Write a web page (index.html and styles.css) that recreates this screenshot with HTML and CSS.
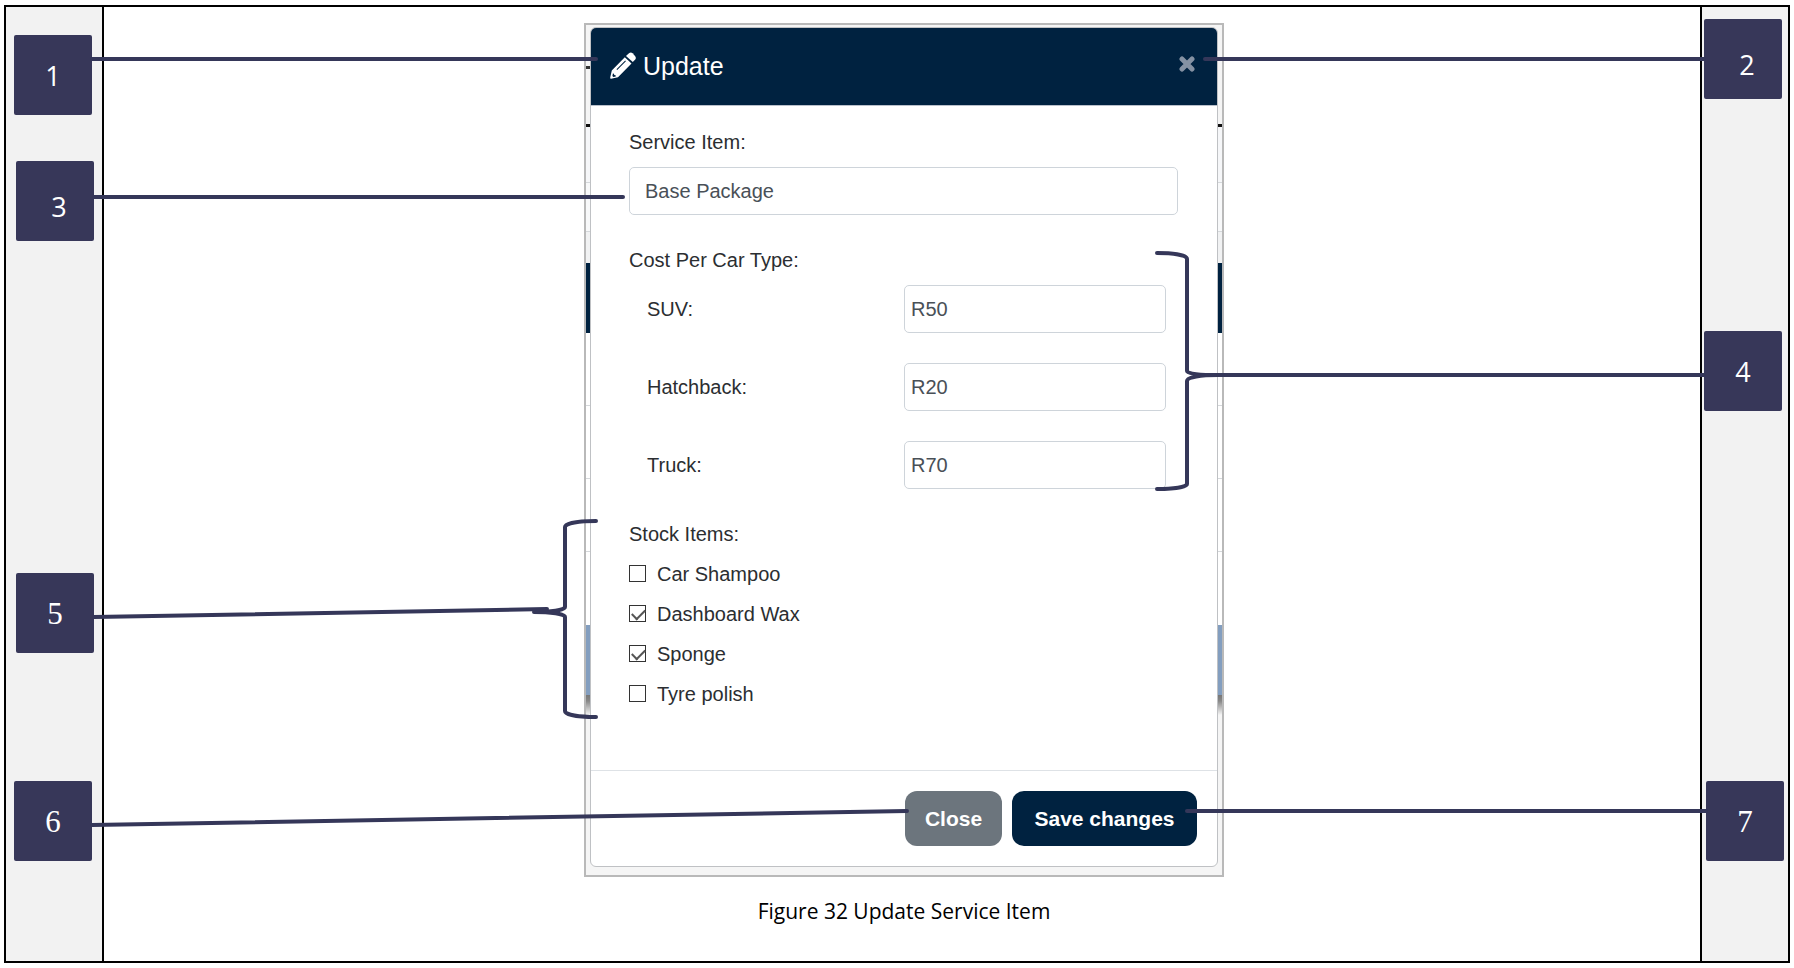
FILE: index.html
```html
<!DOCTYPE html>
<html lang="en">
<head>
<meta charset="utf-8">
<title>Figure 32 Update Service Item</title>
<link rel="stylesheet" href="styles.css">
</head>
<body>
<div class="sheet">
  <aside class="rail rail-left">
    <div class="marker marker-1">1</div>
    <div class="marker marker-3 marker-low">3</div>
    <div class="marker marker-5 marker-serif">5</div>
    <div class="marker marker-6 marker-serif">6</div>
  </aside>

  <main class="stage">
    <figure class="figure">
      <div class="shot">
        <form class="dialog">
          <header class="dialog-header">
            <svg class="pencil" viewBox="0 0 26 27" aria-hidden="true">
              <path fill="#fff" d="M17 3 L19.300 1 Q21 0 22.600 1.300 L25 4 Q26.600 6 25 7.700 L22.800 10 L16 4.100 Z"/>
              <path fill="#fff" fill-rule="evenodd" d="M14.800 5.300 L21.500 11.500 L8 25.200 L1 26.800 Q0 26.800 .2 25.600 L1.800 18.400 Z M2.900 21.600 L2.400 24 L3.400 25 L5.800 24.500 L5.600 23.300 L4.200 23.100 L4 21.700 Z M15.200 8.600 L6.500 17.300 L7.200 18 L15.900 9.300 Z"/>
            </svg>
            <h1 class="title">Update</h1>
            <button class="dismiss" type="button" aria-label="Dismiss">
              <svg viewBox="0 0 16 18" aria-hidden="true"><path d="M3 4 L13 14 M13 4 L3 14" stroke="#8592a3" stroke-width="5" stroke-linecap="round"/></svg>
            </button>
          </header>

          <div class="dialog-body">
            <section class="group">
              <label class="label" for="item">Service Item:</label>
              <input class="field field-wide" id="item" type="text" value="Base Package">
            </section>
            <section class="group">
              <div class="label">Cost Per Car Type:</div>
              <div class="costs">
                <div class="cost"><label for="suv">SUV:</label><input class="field" id="suv" type="text" value="R50"></div>
                <div class="cost"><label for="hatch">Hatchback:</label><input class="field" id="hatch" type="text" value="R20"></div>
                <div class="cost"><label for="truck">Truck:</label><input class="field" id="truck" type="text" value="R70"></div>
              </div>
            </section>
            <section class="stock">
              <div class="label">Stock Items:</div>
              <label class="option"><input class="tick" type="checkbox">Car Shampoo</label>
              <label class="option"><input class="tick" type="checkbox" checked>Dashboard Wax</label>
              <label class="option"><input class="tick" type="checkbox" checked>Sponge</label>
              <label class="option"><input class="tick" type="checkbox">Tyre polish</label>
            </section>
          </div>

          <footer class="dialog-footer">
            <button class="btn btn-close" type="button">Close</button>
            <button class="btn btn-save" type="button">Save changes</button>
          </footer>
        </form>
        <svg class="ink brace-costs" viewBox="0 0 68 241" aria-hidden="true"><path d="M4 2 C20 2 34 4 34 8 V120 C34 123 48 124 65 124 C48 124 34 126 34 130 V233 C34 236 20 238 4 238"/></svg>
        <svg class="ink brace-stock" viewBox="0 0 70 200" aria-hidden="true"><path d="M66 2 C50 2 35 4 35 8 V88 C35 91 20 93 4 93 C20 93 35 95 35 98 V192 C35 196 50 198 66 198"/></svg>
      </div>
      <figcaption class="caption">Figure 32 Update Service Item</figcaption>
    </figure>

    <svg class="ink wire wire-1" viewBox="0 0 100 4" preserveAspectRatio="none" aria-hidden="true"><path d="M0 2 H100"/></svg>
    <svg class="ink wire wire-2" viewBox="0 0 100 4" preserveAspectRatio="none" aria-hidden="true"><path d="M0 2 H100"/></svg>
    <svg class="ink wire wire-3" viewBox="0 0 100 4" preserveAspectRatio="none" aria-hidden="true"><path d="M0 2 H100"/></svg>
    <svg class="ink wire wire-4" viewBox="0 0 100 4" preserveAspectRatio="none" aria-hidden="true"><path d="M0 2 H100"/></svg>
    <svg class="ink wire wire-5" viewBox="0 0 100 8" preserveAspectRatio="none" aria-hidden="true"><path d="M0 8 L100 0"/></svg>
    <svg class="ink wire wire-6" viewBox="0 0 100 14" preserveAspectRatio="none" aria-hidden="true"><path d="M0 14 L100 0"/></svg>
    <svg class="ink wire wire-7" viewBox="0 0 100 4" preserveAspectRatio="none" aria-hidden="true"><path d="M0 2 H100"/></svg>
  </main>

  <aside class="rail rail-right">
    <div class="marker marker-2 marker-low">2</div>
    <div class="marker marker-4">4</div>
    <div class="marker marker-7 marker-serif">7</div>
  </aside>
</div>
</body>
</html>
```

FILE: styles.css
```css
* { box-sizing: border-box; }

body {
  margin: 0;
  padding: 5px 4px;
  background: #fff;
  color: #2b2e31;
  font: 20px/24px "Liberation Sans", Arial, sans-serif;
}

.sheet {
  display: grid;
  grid-template-columns: 98px minmax(0, 1fr) 88px;
  min-height: calc(100vh - 10px);
  border: 2px solid #000;
}

/* Numbered side rails */
.rail { position: relative; z-index: 1; background: #f2f2f2; }
.rail-left { border-right: 2px solid #000; }
.rail-right { border-left: 2px solid #000; }

.marker {
  position: absolute;
  display: flex;
  align-items: center;
  justify-content: center;
  width: 78px;
  height: 80px;
  padding-top: 2px;
  border-radius: 2px;
  background: #373759;
  color: #fff;
  font: 27px/32px "Open Sans", "Noto Sans", sans-serif;
}
.marker-low { padding: 12px 0 0 8px; }
.marker-serif { font: 31px/32px "Liberation Serif", serif; }
.marker-1 { left: 8px; top: 28px; }
.marker-3 { left: 10px; top: 154px; }
.marker-5 { left: 10px; top: 566px; }
.marker-6 { left: 8px; top: 774px; }
.marker-2 { left: 2px; top: 12px; }
.marker-4 { left: 2px; top: 324px; }
.marker-7 { left: 4px; top: 774px; }

/* Figure */
.stage { position: relative; z-index: 2; padding: 16px 0 0 4px; }

.figure { display: flex; flex-direction: column; align-items: center; margin: 0; }

.shot {
  position: relative;
  width: 100%;
  max-width: 640px;
  padding: 2px 4px 8px;
  border: 2px solid #b9b9b9;
  background:
    linear-gradient(#333, #333) 0 41px / 6px 3px no-repeat,
    linear-gradient(
      #f5f5f5 99px, #111 99px, #111 102px,
      #f6f7f9 102px, #f6f7f9 157px, #d5d8db 157px, #d5d8db 158px,
      #f8f9fa 158px, #f8f9fa 206px, #d5d8db 206px, #d5d8db 207px,
      #f1f2f3 207px, #f1f2f3 238px, #002240 238px, #002240 308px,
      #fff 308px, #fff 380px, #d5d8db 380px, #d5d8db 381px,
      #fff 381px, #fff 453px, #d5d8db 453px, #d5d8db 454px,
      #fff 454px, #fff 526px, #d5d8db 526px, #d5d8db 527px,
      #fff 527px, #fff 600px, #839ebf 600px, #839ebf 670px,
      #777 670px, #888 676px, #f5f5f5 690px);
}

.dialog {
  border: 1px solid #bfc1c4;
  border-radius: 6px;
  background: #fff;
  overflow: hidden;
}

.dialog-header {
  display: flex;
  align-items: center;
  height: 78px;
  padding: 0 22px 0 19px;
  border-bottom: 1px solid #b9c0cb;
  background: #002240;
  color: #fff;
}
.pencil { width: 26px; height: 27px; margin-bottom: 2px; }
.title { flex: 1; margin: 0 0 2px 7px; font-size: 25px; line-height: 30px; font-weight: 400; }
.dismiss { display: flex; margin-bottom: 6px; padding: 0; border: 0; background: none; }
.dismiss svg { width: 16px; height: 18px; }

.dialog-body { padding: 24px 39px 64px 38px; }
.group { margin-bottom: 33px; }
.label { display: block; margin-bottom: 13px; }

.field {
  display: block;
  width: 100%;
  height: 48px;
  padding: 0 6px;
  border: 1px solid #ced4da;
  border-radius: 5px;
  background: #fff;
  color: #495057;
  font: inherit;
}
.field-wide { padding: 0 15px; }

.costs { display: grid; gap: 30px; padding: 0 12px 0 18px; }
.cost { display: grid; grid-template-columns: minmax(0, 1fr) 262px; align-items: center; }

.stock { display: grid; gap: 16px; justify-items: start; }
.stock .label { margin: 0; }
.option { display: flex; align-items: center; gap: 11px; }

.tick {
  appearance: none;
  width: 17px;
  height: 17px;
  margin: 0 0 2px;
  border: 1px solid #333;
  background: #fff;
}
.tick:checked::before {
  content: "";
  display: block;
  width: 11px;
  height: 6px;
  margin: 3px 0 0 2px;
  border: solid #555;
  border-width: 0 0 2px 2px;
  transform: rotate(-45deg);
}

.dialog-footer {
  display: flex;
  justify-content: flex-end;
  gap: 10px;
  padding: 20px;
  border-top: 1px solid #dee2e6;
}
.btn {
  height: 55px;
  padding: 0;
  border: 0;
  border-radius: 12px;
  color: #fff;
  font: bold 21px/24px "Liberation Sans", Arial, sans-serif;
}
.btn-close { width: 97px; background: #6c757d; }
.btn-save { width: 185px; background: #002240; }

.caption {
  margin-top: 18px;
  color: #000;
  font: 21px/32px "Open Sans", "Noto Sans", sans-serif;
}

/* Callout lines and braces */
.ink {
  position: absolute;
  overflow: visible;
  fill: none;
  stroke: #353759;
  stroke-width: 4px;
  stroke-linecap: round;
  stroke-linejoin: round;
  pointer-events: none;
}
.ink path { vector-effect: non-scaling-stroke; }

.brace-costs { right: 1px; top: 226px; width: 68px; height: 241px; }
.brace-stock { left: -56px; top: 494px; width: 70px; height: 200px; }

.wire { height: 4px; }
.wire-1 { left: -12px; top: 50px; width: calc(50% - 294px); }
.wire-3 { left: -10px; top: 188px; width: calc(50% - 269px); }
.wire-5 { left: -10px; top: 602px; width: calc(50% - 345px); height: 8px; }
.wire-6 { left: -12px; top: 804px; width: calc(50% + 17px); height: 14px; }
.wire-2 { left: calc(50% + 303px); top: 50px; width: calc(50% - 299px); }
.wire-4 { left: calc(50% + 316px); top: 366px; width: calc(50% - 312px); }
.wire-7 { left: calc(50% + 285px); top: 802px; width: calc(50% - 279px); }
```
